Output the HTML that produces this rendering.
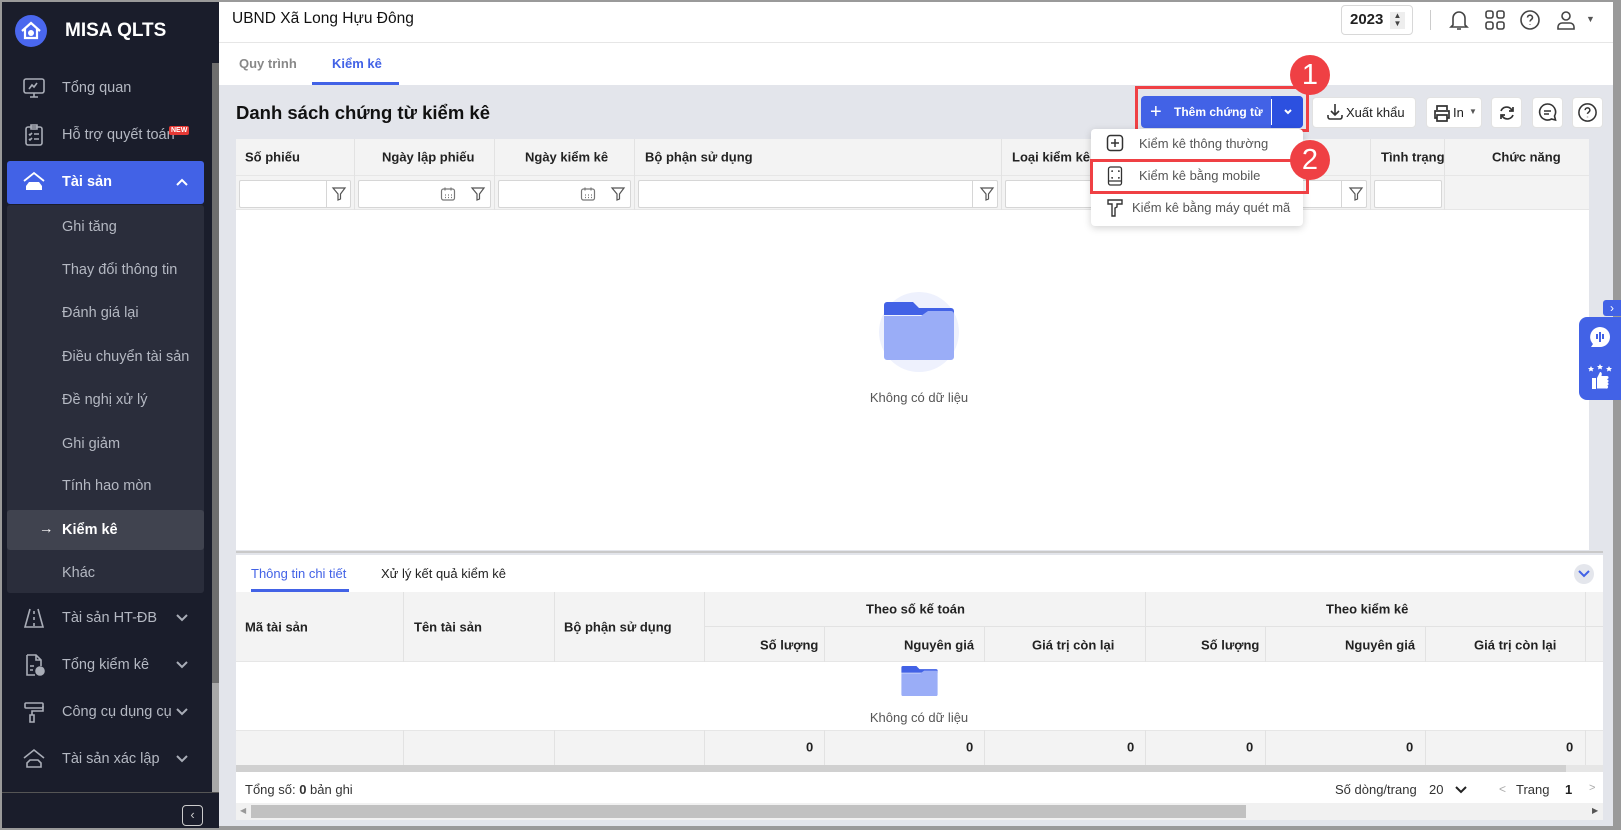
<!DOCTYPE html>
<html><head><meta charset="utf-8">
<style>
*{box-sizing:border-box;margin:0;padding:0}
body{width:1621px;height:830px;overflow:hidden;background:#9a9a9a;font-family:"Liberation Sans",sans-serif;font-size:13px;color:#212121;position:relative}
.a{position:absolute}
.sb{left:2px;top:2px;width:217px;height:826px;background:#1a1d2b}
.mi{position:absolute;left:62px;color:#b4b8c2;font-size:14.5px;transform:translateY(-50%)}
.ic{position:absolute;left:22px;transform:translateY(-50%)}
.chev{position:absolute;left:176px;transform:translateY(-50%)}
.th{position:absolute;font-weight:bold;font-size:13px;color:#222;transform:translateY(-50%)}
.vl{position:absolute;width:1px;background:#e2e2e2}
.fi{position:absolute;top:180px;height:28px;background:#fff;border:1px solid #d6d6d6;border-radius:2px}
.btn{position:absolute;background:#fff;border-radius:4px;border:1px solid #e2e2e2}
</style></head><body>
<!-- sidebar -->
<div class="a sb"></div>
<div class="a" style="left:212px;top:63px;width:7px;height:620px;background:#6e6e6e"></div>
<div class="a" style="left:212px;top:683px;width:7px;height:109px;background:#a8a8a8"></div>
<div class="a" style="left:15px;top:15px;width:32px;height:32px;border-radius:50%;background:#4a67ee"></div>
<svg class="a" style="left:19px;top:19px" width="24" height="24" viewBox="0 0 24 24"><path d="M3 12 L12 4 L21 12 M6 10 V19 H18 V10" fill="none" stroke="#fff" stroke-width="2.2"/><circle cx="12" cy="14" r="3" fill="#fff"/></svg>
<div class="a" style="left:65px;top:20px;color:#fff;font-weight:bold;font-size:19px">MISA QLTS</div>
<svg class="ic" style="top:88px" width="24" height="24" viewBox="0 0 24 24" fill="none" stroke="#a9adb7" stroke-width="1.6"><rect x="2" y="3" width="20" height="14" rx="2"/><path d="M7 13l3-4 2 2 3-4M12 17v4M8 21h8"/></svg>
<div class="mi" style="top:88px">Tổng quan</div>
<svg class="ic" style="top:135px" width="24" height="24" viewBox="0 0 24 24" fill="none" stroke="#a9adb7" stroke-width="1.6"><rect x="4" y="4" width="16" height="18" rx="2"/><path d="M9 2h6v4H9zM7 11l1 1 2-2M12 11h5M7 16l1 1 2-2M12 16h5"/></svg>
<div class="mi" style="top:135px">Hỗ trợ quyết toán</div>
<div class="a" style="left:169px;top:126px;background:#e53935;color:#fff;font-size:7px;font-weight:bold;padding:1px 2px;border-radius:2px">NEW</div>
<div class="a" style="left:7px;top:161px;width:197px;height:43px;background:#4262e6;border-radius:3px"></div>
<svg class="ic" style="top:182px" width="24" height="24" viewBox="0 0 24 24" fill="#fff"><path d="M2 11L12 3l10 8" fill="none" stroke="#fff" stroke-width="1.8"/><path d="M4 20v-4l3-4h10l3 4v4z"/></svg>
<div class="mi" style="top:182px;color:#fff;font-weight:bold">Tài sản</div>
<svg class="chev" style="top:182px" width="12" height="8" viewBox="0 0 12 8"><path d="M1 7l5-5 5 5" fill="none" stroke="#fff" stroke-width="2"/></svg>
<div class="a" style="left:7px;top:205px;width:197px;height:388px;background:#2a2d3b;border-radius:3px"></div>
<div class="a" style="left:7px;top:510px;width:197px;height:40px;background:#40434f;border-radius:3px"></div>
<div class="mi" style="top:227px">Ghi tăng</div>
<div class="mi" style="top:270px">Thay đổi thông tin</div>
<div class="mi" style="top:313px">Đánh giá lại</div>
<div class="mi" style="top:357px">Điều chuyển tài sản</div>
<div class="mi" style="top:400px">Đề nghị xử lý</div>
<div class="mi" style="top:444px">Ghi giảm</div>
<div class="mi" style="top:486px">Tính hao mòn</div>
<div class="mi" style="top:529px;color:#fff;left:39px">→</div>
<div class="mi" style="top:530px;color:#fff;font-weight:bold">Kiểm kê</div>
<div class="mi" style="top:573px">Khác</div>
<svg class="ic" style="top:618px" width="24" height="24" viewBox="0 0 24 24" fill="none" stroke="#a9adb7" stroke-width="1.6"><path d="M8 3L3 21h18L16 3M12 5v3M12 11v3M12 17v3"/></svg>
<div class="mi" style="top:618px">Tài sản HT-ĐB</div>
<svg class="ic" style="top:665px" width="24" height="24" viewBox="0 0 24 24" fill="none" stroke="#a9adb7" stroke-width="1.6"><path d="M5 2h9l5 5v6M5 2v20h8M14 2v5h5M8 13h4M8 17h3"/><circle cx="18" cy="18" r="4" fill="#a9adb7"/></svg>
<div class="mi" style="top:665px">Tổng kiểm kê</div>
<svg class="ic" style="top:712px" width="24" height="24" viewBox="0 0 24 24" fill="none" stroke="#a9adb7" stroke-width="1.6"><rect x="3" y="3" width="18" height="5" rx="1"/><path d="M21 6v5H10v4M8 15h4v7H8z"/></svg>
<div class="mi" style="top:712px">Công cụ dụng cụ</div>
<svg class="ic" style="top:759px" width="24" height="24" viewBox="0 0 24 24" fill="none" stroke="#a9adb7" stroke-width="1.6"><path d="M2 11L12 3l10 8M5 20v-4l3-3h8l3 3v4z"/></svg>
<div class="mi" style="top:759px">Tài sản xác lập</div>
<svg class="chev" style="top:618px" width="12" height="8" viewBox="0 0 12 8"><path d="M1 1l5 5 5-5" fill="none" stroke="#a9adb7" stroke-width="2"/></svg>
<svg class="chev" style="top:665px" width="12" height="8" viewBox="0 0 12 8"><path d="M1 1l5 5 5-5" fill="none" stroke="#a9adb7" stroke-width="2"/></svg>
<svg class="chev" style="top:712px" width="12" height="8" viewBox="0 0 12 8"><path d="M1 1l5 5 5-5" fill="none" stroke="#a9adb7" stroke-width="2"/></svg>
<svg class="chev" style="top:759px" width="12" height="8" viewBox="0 0 12 8"><path d="M1 1l5 5 5-5" fill="none" stroke="#a9adb7" stroke-width="2"/></svg>
<div class="a" style="left:2px;top:792px;width:217px;height:1px;background:#555"></div>
<div class="a" style="left:182px;top:805px;width:21px;height:21px;border:1px solid #ccc;border-radius:4px;color:#ccc;font-size:13px;text-align:center;line-height:18px">‹</div>

<!-- main -->
<div class="a" style="left:219px;top:2px;width:1394px;height:824px;background:#e3e5eb"></div>
<div class="a" style="left:219px;top:2px;width:1394px;height:83px;background:#fff"></div>
<div class="a" style="left:219px;top:42px;width:1394px;height:1px;background:#e6e6e6"></div>
<div class="a" style="left:232px;top:10px;font-size:15.5px;color:#111">UBND Xã Long Hựu Đông</div>
<div class="a" style="left:1341px;top:5px;width:72px;height:30px;border:1px solid #d8d8d8;border-radius:4px"></div>
<div class="a" style="left:1350px;top:11px;font-weight:bold;font-size:15px">2023</div>
<div class="a" style="left:1390px;top:12px;width:15px;height:17px;background:#eee;font-size:8px;line-height:8px;text-align:center;color:#444">▲<br>▼</div>
<div class="a" style="left:1430px;top:10px;width:1px;height:20px;background:#ccc"></div>
<svg class="a" style="left:1448px;top:9px" width="22" height="22" viewBox="0 0 22 22" fill="none" stroke="#444" stroke-width="1.6"><path d="M5 16V9a6 6 0 0112 0v7l2 2H3zM9 20h4"/></svg>
<svg class="a" style="left:1484px;top:9px" width="22" height="22" viewBox="0 0 22 22" fill="none" stroke="#444" stroke-width="1.6"><rect x="2" y="2" width="7" height="7" rx="2"/><rect x="13" y="2" width="7" height="7" rx="2"/><rect x="2" y="13" width="7" height="7" rx="2"/><rect x="13" y="13" width="7" height="7" rx="2"/></svg>
<svg class="a" style="left:1519px;top:9px" width="22" height="22" viewBox="0 0 22 22" fill="none" stroke="#444" stroke-width="1.6"><circle cx="11" cy="11" r="9"/><path d="M8.5 8.5a2.5 2.5 0 015 .3c0 1.7-2.5 2-2.5 3.7M11 15.5v.5"/></svg>
<svg class="a" style="left:1555px;top:9px" width="22" height="22" viewBox="0 0 22 22" fill="none" stroke="#444" stroke-width="1.6"><circle cx="11" cy="7" r="4"/><path d="M3 20v-2a4 4 0 014-4h8a4 4 0 014 4v2z"/></svg>
<div class="a" style="left:1586px;top:14px;font-size:9px;color:#555">▼</div>
<div class="a" style="left:239px;top:56px;color:#888;font-weight:bold;font-size:13px">Quy trình</div>
<div class="a" style="left:332px;top:56px;color:#4262e6;font-weight:bold;font-size:13px">Kiểm kê</div>
<div class="a" style="left:312px;top:82px;width:87px;height:3px;background:#4262e6"></div>
<div class="a" style="left:236px;top:102px;font-weight:bold;font-size:18.5px;color:#111">Danh sách chứng từ kiểm kê</div>

<!-- toolbar -->
<div class="a" style="left:1141px;top:96px;width:162px;height:32px;background:#4262e6;border-radius:4px"></div>
<div class="a" style="left:1271px;top:96px;width:32px;height:32px;background:#2c50e0;border-radius:0 4px 4px 0"></div>
<div class="a" style="left:1271px;top:99px;width:1px;height:26px;background:#fff"></div>
<div class="a" style="left:1150px;top:101px;color:#fff;font-size:20px;font-weight:300">+</div>
<div class="a" style="left:1174px;top:105px;color:#fff;font-weight:bold;font-size:12px;line-height:14px">Thêm chứng từ</div>
<svg class="a" style="left:1283px;top:108px" width="10" height="8" viewBox="0 0 10 8"><path d="M2 2l3 3 3-3" fill="none" stroke="#fff" stroke-width="2"/></svg>
<div class="a" style="left:1135px;top:86px;width:174px;height:46px;border:3px solid #ef4044"></div>
<div class="btn" style="left:1312px;top:97px;width:104px;height:31px"></div>
<svg class="a" style="left:1326px;top:102px" width="18" height="20" viewBox="0 0 18 20" fill="none" stroke="#333" stroke-width="1.6"><path d="M9 2v11M5 9l4 4 4-4M2 13v2a2 2 0 002 2h10a2 2 0 002-2v-2"/></svg>
<div class="a" style="left:1346px;top:105px;font-size:13px">Xuất khẩu</div>
<div class="btn" style="left:1426px;top:97px;width:56px;height:31px"></div>
<svg class="a" style="left:1432px;top:103px" width="20" height="20" viewBox="0 0 20 20" fill="none" stroke="#333" stroke-width="1.7"><path d="M5 7V3h10v4M5 15H3V8h14v7h-2M5 12h10v6H5z"/></svg>
<div class="a" style="left:1453px;top:105px;font-size:13px">In</div>
<div class="a" style="left:1469px;top:107px;font-size:8px;color:#555">▼</div>
<div class="btn" style="left:1491px;top:97px;width:31px;height:31px"></div>
<svg class="a" style="left:1497px;top:103px" width="20" height="20" viewBox="0 0 20 20" fill="none" stroke="#333" stroke-width="1.7"><path d="M4 8a6 6 0 0110-2l2 2M16 12a6 6 0 01-10 2l-2-2M16 4v4h-4M4 16v-4h4"/></svg>
<div class="btn" style="left:1532px;top:97px;width:31px;height:31px"></div>
<svg class="a" style="left:1537px;top:102px" width="21" height="21" viewBox="0 0 21 21" fill="none" stroke="#333" stroke-width="1.6"><path d="M10.5 2a8 8 0 017 12l1 4-4-1A8 8 0 1110.5 2zM7 9h7M7 12h5"/></svg>
<div class="btn" style="left:1572px;top:97px;width:31px;height:31px"></div>
<svg class="a" style="left:1577px;top:102px" width="21" height="21" viewBox="0 0 22 22" fill="none" stroke="#333" stroke-width="1.6"><circle cx="11" cy="11" r="9"/><path d="M8.5 8.5a2.5 2.5 0 015 .3c0 1.7-2.5 2-2.5 3.7M11 15.5v.5"/></svg>

<!-- top table -->
<div class="a" style="left:236px;top:139px;width:1353px;height:411px;background:#fff"></div>
<div class="a" style="left:236px;top:139px;width:1353px;height:71px;background:#f3f3f3;border-bottom:1px solid #e6e6e6"></div>
<div class="a" style="left:236px;top:175px;width:1353px;height:1px;background:#e6e6e6"></div>
<div class="vl" style="left:354px;top:139px;height:71px"></div>
<div class="vl" style="left:494px;top:139px;height:71px"></div>
<div class="vl" style="left:634px;top:139px;height:71px"></div>
<div class="vl" style="left:1001px;top:139px;height:71px"></div>
<div class="vl" style="left:1370px;top:139px;height:71px"></div>
<div class="vl" style="left:1444px;top:139px;height:71px"></div>
<div class="th" style="left:245px;top:157px">Số phiếu</div>
<div class="th" style="left:382px;top:157px">Ngày lập phiếu</div>
<div class="th" style="left:525px;top:157px">Ngày kiểm kê</div>
<div class="th" style="left:645px;top:157px">Bộ phận sử dụng</div>
<div class="th" style="left:1012px;top:157px">Loại kiểm kê</div>
<div class="th" style="left:1381px;top:157px">Tình trạng</div>
<div class="th" style="left:1492px;top:157px">Chức năng</div>
<div class="fi" style="left:239px;width:112px"></div><div class="vl" style="left:326px;top:181px;height:26px;background:#d6d6d6"></div>
<div class="fi" style="left:358px;width:133px"></div>
<div class="fi" style="left:498px;width:133px"></div>
<div class="fi" style="left:638px;width:360px"></div><div class="vl" style="left:972px;top:181px;height:26px;background:#d6d6d6"></div>
<div class="fi" style="left:1005px;width:362px"></div><div class="vl" style="left:1341px;top:181px;height:26px;background:#d6d6d6"></div>
<div class="fi" style="left:1374px;width:68px"></div>
<svg class="a" style="left:331px;top:186px" width="16" height="16" viewBox="0 0 16 16" fill="none" stroke="#555" stroke-width="1.2"><path d="M2 2h12L9.5 8v5L7 14V8z"/></svg>
<svg class="a" style="left:470px;top:186px" width="16" height="16" viewBox="0 0 16 16" fill="none" stroke="#555" stroke-width="1.2"><path d="M2 2h12L9.5 8v5L7 14V8z"/></svg>
<svg class="a" style="left:440px;top:186px" width="16" height="16" viewBox="0 0 16 16" fill="none" stroke="#777" stroke-width="1.2"><rect x="1.5" y="3" width="13" height="11" rx="2"/><path d="M5 1.5v3M11 1.5v3M5 9h1M8 9h1M11 9h1M5 11.5h1M8 11.5h1M11 11.5h1"/></svg>
<svg class="a" style="left:610px;top:186px" width="16" height="16" viewBox="0 0 16 16" fill="none" stroke="#555" stroke-width="1.2"><path d="M2 2h12L9.5 8v5L7 14V8z"/></svg>
<svg class="a" style="left:580px;top:186px" width="16" height="16" viewBox="0 0 16 16" fill="none" stroke="#777" stroke-width="1.2"><rect x="1.5" y="3" width="13" height="11" rx="2"/><path d="M5 1.5v3M11 1.5v3M5 9h1M8 9h1M11 9h1M5 11.5h1M8 11.5h1M11 11.5h1"/></svg>
<svg class="a" style="left:979px;top:186px" width="16" height="16" viewBox="0 0 16 16" fill="none" stroke="#555" stroke-width="1.2"><path d="M2 2h12L9.5 8v5L7 14V8z"/></svg>
<svg class="a" style="left:1348px;top:186px" width="16" height="16" viewBox="0 0 16 16" fill="none" stroke="#555" stroke-width="1.2"><path d="M2 2h12L9.5 8v5L7 14V8z"/></svg>
<div class="a" style="left:879px;top:292px;width:80px;height:80px;border-radius:50%;background:#eef1fd"></div>
<svg class="a" style="left:884px;top:302px" width="70" height="58" viewBox="0 0 70 58"><path d="M0 3a3 3 0 013-3h26l6 6h32a3 3 0 013 3v4H0z" fill="#4262e6"/><path d="M0 14h37l7-5h23a3 3 0 013 3v43a3 3 0 01-3 3H3a3 3 0 01-3-3z" fill="#9aadf7"/></svg>
<div class="a" style="left:919px;top:390px;transform:translateX(-50%);color:#555;font-size:13px">Không có dữ liệu</div>

<!-- dropdown -->
<div class="a" style="left:1091px;top:129px;width:212px;height:97px;background:#fff;border-radius:4px;box-shadow:0 2px 8px rgba(0,0,0,.18)"></div>
<svg class="a" style="left:1106px;top:134px" width="18" height="18" viewBox="0 0 18 18" fill="none" stroke="#333" stroke-width="1.5"><rect x="1.5" y="1.5" width="15" height="15" rx="3"/><path d="M9 5v8M5 9h8"/></svg>
<div class="a" style="left:1139px;top:136px;color:#555;font-size:13px">Kiểm kê thông thường</div>
<svg class="a" style="left:1107px;top:166px" width="16" height="20" viewBox="0 0 16 20" fill="none" stroke="#333" stroke-width="1.3"><rect x="1.5" y="1" width="13" height="18" rx="2"/><path d="M5 6V5h1M11 5h1v1M5 11v1h1M11 12h1v-1M1.5 15h13"/></svg>
<div class="a" style="left:1139px;top:168px;color:#555;font-size:13px">Kiểm kê bằng mobile</div>
<svg class="a" style="left:1107px;top:198px" width="16" height="20" viewBox="0 0 16 20" fill="none" stroke="#333" stroke-width="1.4"><path d="M1 2h14v4H10v3l-2 1v8H5V6H1z"/></svg>
<div class="a" style="left:1132px;top:200px;color:#555;font-size:13px">Kiểm kê bằng máy quét mã</div>
<div class="a" style="left:1090px;top:159px;width:219px;height:35px;border:3px solid #ef4044"></div>
<div class="a" style="left:1290px;top:55px;width:40px;height:40px;border-radius:50%;background:#ef4044;color:#fff;font-size:29px;text-align:center;line-height:40px">1</div>
<div class="a" style="left:1290px;top:140px;width:40px;height:40px;border-radius:50%;background:#ef4044;color:#fff;font-size:29px;text-align:center;line-height:40px">2</div>

<!-- bottom panel -->
<div class="a" style="left:236px;top:551px;width:1367px;height:2px;background:#c9c9c9"></div>
<div class="a" style="left:236px;top:555px;width:1367px;height:265px;background:#fff"></div>
<div class="a" style="left:251px;top:566px;color:#4262e6;font-size:13px">Thông tin chi tiết</div>
<div class="a" style="left:251px;top:589px;width:98px;height:3px;background:#4262e6"></div>
<div class="a" style="left:381px;top:566px;color:#222;font-size:13px">Xử lý kết quả kiểm kê</div>
<div class="a" style="left:1574px;top:564px;width:20px;height:20px;border-radius:50%;background:#e4e6ec"></div>
<svg class="a" style="left:1578px;top:570px" width="12" height="8" viewBox="0 0 12 8"><path d="M1 1l5 5 5-5" fill="none" stroke="#4262e6" stroke-width="2"/></svg>
<div class="a" style="left:236px;top:592px;width:1367px;height:70px;background:#f3f3f3;border-bottom:1px solid #e6e6e6"></div>
<div class="a" style="left:704px;top:626px;width:899px;height:1px;background:#e2e2e2"></div>
<div class="vl" style="left:403px;top:592px;height:70px"></div>
<div class="vl" style="left:554px;top:592px;height:70px"></div>
<div class="vl" style="left:704px;top:592px;height:70px"></div>
<div class="vl" style="left:824px;top:626px;height:36px"></div>
<div class="vl" style="left:984px;top:626px;height:36px"></div>
<div class="vl" style="left:1145px;top:592px;height:70px"></div>
<div class="vl" style="left:1265px;top:626px;height:36px"></div>
<div class="vl" style="left:1425px;top:626px;height:36px"></div>
<div class="vl" style="left:1585px;top:592px;height:70px"></div>
<div class="th" style="left:245px;top:627px">Mã tài sản</div>
<div class="th" style="left:414px;top:627px">Tên tài sản</div>
<div class="th" style="left:564px;top:627px">Bộ phận sử dụng</div>
<div class="th" style="left:866px;top:609px">Theo số kế toán</div>
<div class="th" style="left:1326px;top:609px">Theo kiểm kê</div>
<div class="th" style="left:760px;top:645px">Số lượng</div>
<div class="th" style="left:904px;top:645px">Nguyên giá</div>
<div class="th" style="left:1032px;top:645px">Giá trị còn lại</div>
<div class="th" style="left:1201px;top:645px">Số lượng</div>
<div class="th" style="left:1345px;top:645px">Nguyên giá</div>
<div class="th" style="left:1474px;top:645px">Giá trị còn lại</div>
<svg class="a" style="left:901px;top:666px" width="37" height="30" viewBox="0 0 70 58"><path d="M0 3a3 3 0 013-3h26l6 6h32a3 3 0 013 3v4H0z" fill="#4262e6"/><path d="M0 14h37l7-5h23a3 3 0 013 3v43a3 3 0 01-3 3H3a3 3 0 01-3-3z" fill="#9aadf7"/></svg>
<div class="a" style="left:919px;top:710px;transform:translateX(-50%);color:#555;font-size:13px">Không có dữ liệu</div>
<div class="a" style="left:236px;top:730px;width:1367px;height:35px;background:#f3f3f3;border-top:1px solid #e6e6e6"></div>
<div class="vl" style="left:403px;top:730px;height:35px"></div><div class="vl" style="left:554px;top:730px;height:35px"></div><div class="vl" style="left:704px;top:730px;height:35px"></div><div class="vl" style="left:824px;top:730px;height:35px"></div><div class="vl" style="left:984px;top:730px;height:35px"></div><div class="vl" style="left:1145px;top:730px;height:35px"></div><div class="vl" style="left:1265px;top:730px;height:35px"></div><div class="vl" style="left:1425px;top:730px;height:35px"></div><div class="vl" style="left:1585px;top:730px;height:35px"></div>
<div class="th" style="left:806px;top:747px">0</div>
<div class="th" style="left:966px;top:747px">0</div>
<div class="th" style="left:1127px;top:747px">0</div>
<div class="th" style="left:1246px;top:747px">0</div>
<div class="th" style="left:1406px;top:747px">0</div>
<div class="th" style="left:1566px;top:747px">0</div>
<div class="a" style="left:236px;top:765px;width:1367px;height:7px;background:#e6e6e6"></div>
<div class="a" style="left:236px;top:765px;width:1330px;height:7px;background:#d0d0d0"></div>
<div class="a" style="left:245px;top:782px;font-size:13px;color:#333">Tổng số: <b>0</b> bản ghi</div>
<div class="a" style="left:1335px;top:782px;font-size:13px;color:#333">Số dòng/trang</div>
<div class="a" style="left:1429px;top:782px;font-size:13px;color:#333">20</div>
<svg class="a" style="left:1455px;top:786px" width="12" height="8" viewBox="0 0 12 8"><path d="M1 1l5 5 5-5" fill="none" stroke="#222" stroke-width="2"/></svg>
<div class="a" style="left:1499px;top:782px;font-size:12px;color:#aaa">&lt;</div>
<div class="a" style="left:1516px;top:782px;font-size:13px;color:#333">Trang</div>
<div class="a" style="left:1565px;top:782px;font-size:13px;font-weight:bold">1</div>
<div class="a" style="left:1589px;top:782px;font-size:11px;color:#aaa">&gt;</div>
<div class="a" style="left:236px;top:803px;width:1367px;height:17px;background:#f1f1f1"></div>
<div class="a" style="left:251px;top:805px;width:995px;height:13px;background:#c1c1c1"></div>
<div class="a" style="left:240px;top:806px;font-size:8px;color:#999">◀</div>
<div class="a" style="left:1592px;top:806px;font-size:8px;color:#555">▶</div>

<!-- right widget -->
<div class="a" style="left:1603px;top:300px;width:18px;height:16px;background:#4262e6;border-radius:3px 0 0 3px;color:#fff;font-size:12px;text-align:center;line-height:16px">›</div>
<div class="a" style="left:1579px;top:317px;width:42px;height:83px;background:#4262e6;border-radius:8px 0 0 8px"></div>
<svg class="a" style="left:1589px;top:326px" width="22" height="22" viewBox="0 0 22 22"><path d="M11 1a10 10 0 110 20H2l2-3A10 10 0 0111 1z" fill="#fff"/><path d="M8 8v5M11 6v10M14 8v5" stroke="#4262e6" stroke-width="2"/></svg>
<svg class="a" style="left:1587px;top:364px" width="26" height="26" viewBox="0 0 26 26" fill="#fff"><path d="M4 2l1 2h2l-1.5 1.5.5 2L4 6.5 2 7.5l.5-2L1 4h2zM13 0l1 2h2l-1.5 1.5.5 2L13 4.5 11 5.5l.5-2L10 2h2zM22 2l1 2h2l-1.5 1.5.5 2L22 6.5 20 7.5l.5-2L19 4h2z"/><rect x="5" y="14" width="4" height="11"/><path d="M10 14l3-6c2 0 2 2 1.5 4H20a1.5 1.5 0 010 3v.5a1.5 1.5 0 010 3 1.5 1.5 0 010 3 1.5 1.5 0 01-1 3H10z"/></svg>
</body></html>
